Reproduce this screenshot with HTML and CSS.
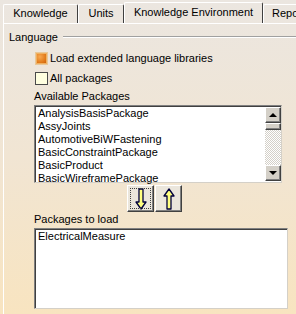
FILE: index.html
```html
<!DOCTYPE html>
<html lang="en">
<head>
    <meta charset="UTF-8">
    <title>Options - Knowledge Environment</title>
    <link rel="stylesheet" href="styles.css">
</head>
<body>
    <div class="window">
        <div class="tabs">
            <div class="tab tab-knowledge">Knowledge</div>
            <div class="tab tab-units">Units</div>
            <div class="tab tab-env active">Knowledge Environment</div>
            <div class="tab tab-repo">Repo</div>
        </div>
        <div class="panel">
            <div class="group-title">
                <span>Language</span>
                <div class="etched"></div>
            </div>
            <div class="group-body">
                <label class="check-row first">
                    <span class="check checked"></span>
                    Load extended language libraries
                </label>
                <label class="check-row">
                    <span class="check"></span>
                    All packages
                </label>

                <div class="caption">Available Packages</div>
                <div class="listbox available">
                    <ul class="items">
                        <li>AnalysisBasisPackage</li>
                        <li>AssyJoints</li>
                        <li>AutomotiveBiWFastening</li>
                        <li>BasicConstraintPackage</li>
                        <li>BasicProduct</li>
                        <li>BasicWireframePackage</li>
                    </ul>
                    <div class="scrollbar">
                        <div class="sb-btn"><span class="tri up"></span></div>
                        <div class="sb-thumb"></div>
                        <div class="sb-track"></div>
                        <div class="sb-btn"><span class="tri down"></span></div>
                    </div>
                </div>

                <div class="move-buttons">
                    <button class="move-btn focused" title="Add">
                        <svg width="12" height="22" viewBox="0 0 12 22">
                            <polygon points="4,1 8,1 8,14 11,14 6,21 1,14 4,14" fill="#ffff80" stroke="#00003c" stroke-width="1.3" stroke-linejoin="round"/>
                        </svg>
                    </button>
                    <button class="move-btn" title="Remove">
                        <svg width="12" height="22" viewBox="0 0 12 22">
                            <polygon points="4,21 8,21 8,8 11,8 6,1 1,8 4,8" fill="#ffff80" stroke="#00003c" stroke-width="1.3" stroke-linejoin="round"/>
                        </svg>
                    </button>
                </div>

                <div class="caption second">Packages to load</div>
                <div class="listbox to-load">
                    <ul class="items">
                        <li>ElectricalMeasure</li>
                    </ul>
                </div>
            </div>
        </div>
    </div>
</body>
</html>
```

FILE: styles.css
```css
* {
    box-sizing: border-box;
}

body {
    margin: 0;
    padding: 0;
    font-family: "Liberation Sans", Arial, sans-serif;
    font-size: 11px;
    color: #000;
}

.window {
    width: 296px;
    height: 314px;
    overflow: hidden;
    padding: 2px 0 0 3px;
    background: linear-gradient(#ebe6e0, #f1e5d3 50%, #f8e4c0);
}

.tabs {
    display: flex;
    align-items: flex-end;
    height: 21px;
    white-space: nowrap;
    overflow: hidden;
}

.tab {
    height: 19px;
    line-height: 17px;
    text-align: center;
    border-top: 1px solid #fff;
    border-left: 1px solid #fff;
    border-right: 1px solid #404040;
    border-radius: 2px 2px 0 0;
    flex-shrink: 0;
}

.tab-knowledge {
    width: 75px;
}

.tab-units {
    width: 46px;
}

.tab-env {
    width: 139px;
}

.tab-repo {
    width: 40px;
    text-align: left;
    padding-left: 8px;
    border-right: none;
}

.tab.active {
    height: 21px;
    line-height: 19px;
}

.panel {
    border-top: 1px solid #fff;
    border-left: 1px solid #fff;
    height: 300px;
    padding: 6px 0 0 5px;
}

.group-title {
    display: flex;
    align-items: center;
    gap: 5px;
    height: 14px;
}

.etched {
    flex: 1;
    height: 2px;
    border-top: 1px solid #a0a0a0;
    border-bottom: 1px solid #fff;
}

.group-body {
    padding-left: 25px;
}

.check-row {
    display: flex;
    align-items: center;
    gap: 2px;
    height: 20px;
}

.check-row.first {
    margin-top: 4px;
}

.check {
    width: 13px;
    height: 13px;
    border: 1px solid #4a4a4a;
    background: #ffffe0;
    margin-left: 1px;
}

.check.checked {
    border: 1px solid #e8c89a;
    background: radial-gradient(circle at 35% 35%, #f8a850, #e07818 60%, #c05808);
    box-shadow: inset 0 0 0 1px #f0b060;
}

.caption {
    height: 13px;
    line-height: 13px;
    margin-top: 2px;
}

.caption.second {
    margin-top: 1px;
}

.listbox {
    background: #fff;
    border-top: 1px solid #808080;
    border-left: 1px solid #808080;
    border-right: 1px solid #d4d0c8;
    border-bottom: 1px solid #d4d0c8;
    box-shadow: inset 1px 1px 0 #404040;
    display: flex;
    margin-top: 2px;
}

.listbox.available {
    width: 248px;
    height: 78px;
}

.listbox.to-load {
    width: 254px;
    height: 81px;
}

.items {
    list-style: none;
    margin: 0;
    padding: 1px 0 0 3px;
    flex: 1;
}

.items li {
    height: 13px;
    line-height: 13px;
}

.scrollbar {
    width: 16px;
    margin: 1px 0;
    display: flex;
    flex-direction: column;
}

.sb-btn,
.sb-thumb {
    background: #d4d0c8;
    border-top: 1px solid #fff;
    border-left: 1px solid #fff;
    border-right: 1px solid #404040;
    border-bottom: 1px solid #404040;
    box-shadow: inset -1px -1px 0 #808080;
}

.sb-btn {
    height: 16px;
    display: flex;
    align-items: center;
    justify-content: center;
}

.sb-thumb {
    height: 7px;
}

.sb-track {
    flex: 1;
    background: repeating-conic-gradient(#d4d0c8 0 25%, #fff 0 50%) 0 0 / 2px 2px;
}

.tri {
    width: 0;
    height: 0;
    border-left: 4px solid transparent;
    border-right: 4px solid transparent;
}

.tri.up {
    border-bottom: 4px solid #000;
}

.tri.down {
    border-top: 4px solid #000;
}

.move-buttons {
    display: flex;
    gap: 1px;
    margin: 2px 0 0 93px;
}

.move-btn {
    width: 27px;
    height: 27px;
    padding: 0;
    background: #ebe6dc;
    border-top: 1px solid #fff;
    border-left: 1px solid #fff;
    border-right: 1px solid #404040;
    border-bottom: 1px solid #404040;
    box-shadow: inset -1px -1px 0 #808080;
    display: flex;
    align-items: center;
    justify-content: center;
}

.move-btn.focused {
    outline: 1px dotted #404040;
    outline-offset: -4px;
}
```
